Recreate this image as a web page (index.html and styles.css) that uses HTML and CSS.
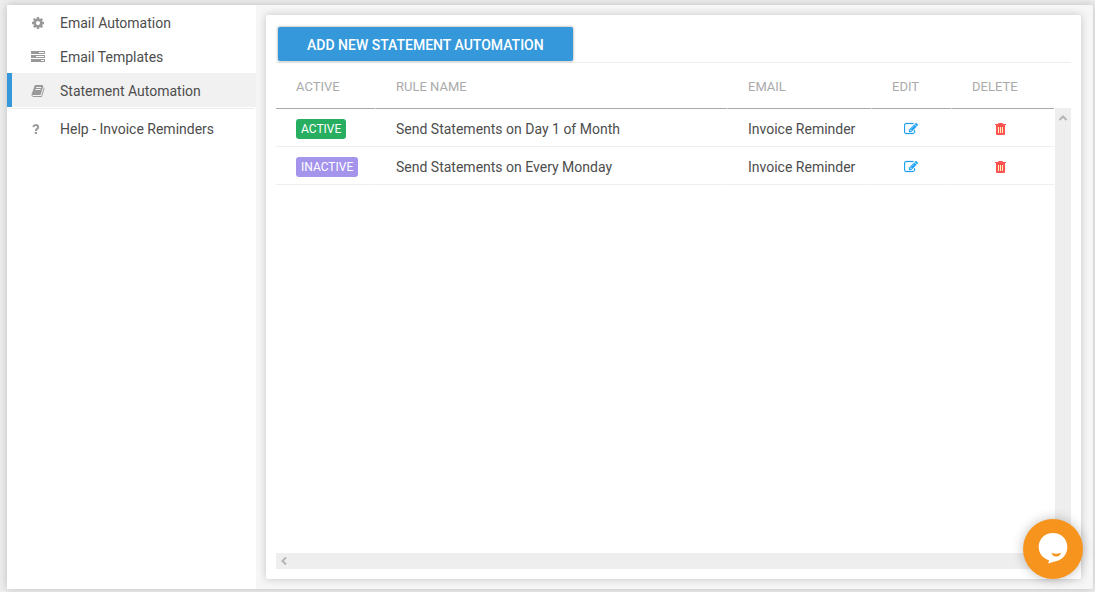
FILE: index.html
```html
<!DOCTYPE html>
<html lang="en">
<head>
<meta charset="utf-8">
<title>Statement Automation</title>
<link rel="stylesheet" href="styles.css">
</head>
<body>
<svg class="defs" aria-hidden="true">
  <symbol id="edit" viewBox="0 0 1792 1792"><path stroke="currentColor" stroke-width="30" d="M888 1184l116-116-152-152-116 116v56h96v96h56zm440-720q-16-16-33 1l-350 350q-17 17-1 33t33-1l350-350q17-17 1-33zm80 594v190q0 119-84.500 203.500t-203.500 84.500h-832q-119 0-203.500-84.500t-84.500-203.500v-832q0-119 84.500-203.500t203.500-84.500h832q63 0 117 25 15 7 18 23 3 17-9 29l-49 49q-14 14-32 8-23-6-45-6h-832q-66 0-113 47t-47 113v832q0 66 47 113t113 47h832q66 0 113-47t47-113v-126q0-13 9-22l64-64q15-15 35-7t20 29zm-96-738l288 288-672 672h-288v-288zm444 132l-92 92-288-288 92-92q28-28 68-28t68 28l152 152q28 28 28 68t-28 68z"/></symbol>
  <symbol id="trash" viewBox="0 0 14 14"><path d="M5.500 2.500v-1h4v1" fill="none" stroke="currentColor"/><path d="M2 2h11v1H2z"/><path d="M3 3h9v9q0 1-1 1H4q-1 0-1-1z"/><path d="M5 5h1v6H5zM7 5h1v6H7zM9 5h1v6H9z" fill="#fff3b8"/></symbol>
</svg>
<div class="shell">
  <nav class="sidebar">
    <a class="nav-item" href="#">
      <svg class="icon" viewBox="0 0 1792 1792"><path d="M1152 896q0-106-75-181t-181-75-181 75-75 181 75 181 181 75 181-75 75-181zm512-109v222q0 12-8 23t-20 13l-185 28q-19 54-39 91 35 50 107 138 10 12 10 25t-9 23q-27 37-99 108t-94 71q-12 0-26-9l-138-108q-44 23-91 38-16 136-29 186-7 28-36 28h-222q-14 0-24.500-8.500t-11.500-21.500l-28-184q-49-16-90-37l-141 107q-10 9-25 9-14 0-25-11-126-114-165-168-7-10-7-23 0-12 8-23 15-21 51-66.500t54-70.500q-27-50-41-99l-183-27q-13-2-21-12.500t-8-23.500v-222q0-12 8-23t19-13l186-28q14-46 39-92-40-57-107-138-10-12-10-24 0-10 9-23 26-36 98.500-107.500t94.500-71.500q13 0 26 10l138 107q44-23 91-38 16-136 29-186 7-28 36-28h222q14 0 24.500 8.500t11.500 21.500l28 184q49 16 90 37l142-107q9-9 24-9 13 0 25 10 129 119 165 170 7 8 7 22 0 12-8 23-15 21-51 66.500t-54 70.500q26 50 41 98l183 28q13 2 21 12.500t8 23.500z"/></svg>
      <span>Email Automation</span>
    </a>
    <a class="nav-item" href="#">
      <svg class="icon" viewBox="0 0 14 14"><path fill-rule="evenodd" d="M0 1h14v3H0zM8 2v1h5V2zM0 5h14v3H0zM5 6v1h8V6zM0 9h14v3H0zM10 10v1h3v-1z"/></svg>
      <span>Email Templates</span>
    </a>
    <a class="nav-item active" href="#" aria-current="page">
      <svg class="icon" viewBox="0 0 1792 1792"><path d="M1703 478q40 57 18 129l-275 906q-19 64-76.500 107.500t-122.500 43.500h-923q-77 0-148.500-53.500t-99.500-131.500q-24-67-2-127 0-4 3-27t4-37q1-8-3-21.500t-3-19.500q2-11 8-21t16.500-23.500 16.500-23.500q23-38 45-91.500t30-91.500q3-10 .5-30t-.5-28q3-11 17-28t17-23q21-36 42-92t25-90q1-9-2.500-32t.5-28q4-13 22-30.500t22-22.500q19-26 42.500-84.500t27.500-96.500q1-8-3-25.500t-2-26.500q2-8 9-18t18-23 17-21q8-12 16.500-30.500t15-35 16-36 19.500-32 26.500-23.500 36-11.500 47.500 5.500l-1 3q38-9 51-9h761q74 0 114 56t18 130l-274 906q-36 119-71.500 153.500t-128.500 34.500h-869q-27 0-38 15-11 16-1 43 24 70 144 70h923q29 0 56-15.500t35-41.500l300-987q7-22 5-57 38 15 59 43zm-1064 2q-4 13 2 22.500t20 9.500h608q13 0 25.500-9.500t16.500-22.500l21-64q4-13-2-22.500t-20-9.500h-608q-13 0-25.500 9.500t-16.500 22.500zm-83 256q-4 13 2 22.500t20 9.500h608q13 0 25.500-9.500t16.500-22.500l21-64q4-13-2-22.500t-20-9.500h-608q-13 0-25.500 9.500t-16.500 22.500z"/></svg>
      <span>Statement Automation</span>
    </a>
    <hr class="divider">
    <a class="nav-item" href="#">
      <svg class="icon" viewBox="0 0 14 14"><path d="M2.200 5Q2.800 3 4.900 3T7.200 5Q7.200 6.300 6 6.900 4.900 7.500 4.900 8.900" fill="none" stroke="currentColor" stroke-width="2"/><path d="M3.800 10H6v2H3.800z"/></svg>
      <span>Help - Invoice Reminders</span>
    </a>
  </nav>
  <main class="panel">
    <div class="toolbar"><button class="add" type="button">ADD NEW STATEMENT AUTOMATION</button></div>
    <div class="list">
      <table class="rules">
        <thead>
          <tr><th class="c-active">ACTIVE</th><th>RULE NAME</th><th class="c-email">EMAIL</th><th class="c-edit">EDIT</th><th class="c-delete">DELETE</th></tr>
        </thead>
        <tbody>
          <tr>
            <td><span class="badge on">ACTIVE</span></td><td>Send Statements on Day 1 of Month</td><td>Invoice Reminder</td>
            <td><button class="act edit" type="button" aria-label="Edit"><svg class="icon"><use href="#edit"/></svg></button></td>
            <td><button class="act delete" type="button" aria-label="Delete"><svg class="icon"><use href="#trash"/></svg></button></td>
          </tr>
          <tr>
            <td><span class="badge off">INACTIVE</span></td><td>Send Statements on Every Monday</td><td>Invoice Reminder</td>
            <td><button class="act edit" type="button" aria-label="Edit"><svg class="icon"><use href="#edit"/></svg></button></td>
            <td><button class="act delete" type="button" aria-label="Delete"><svg class="icon"><use href="#trash"/></svg></button></td>
          </tr>
        </tbody>
      </table>
      <div class="track vertical"><svg class="arrow" viewBox="0 0 8 8"><path d="M.5 6L4 2.500 7.500 6"/></svg></div>
    </div>
    <div class="track horizontal"><svg class="arrow" viewBox="0 0 8 8"><path d="M6 .5L2.500 4 6 7.500"/></svg></div>
  </main>
</div>
<button class="chat" type="button" aria-label="Open chat">
  <svg class="bubble" viewBox="0 0 60 60"><path fill="#fff" d="M30 14c8.200 0 14.300 6 14.300 14 0 6.500-3.600 11-8.300 13.300-3 1.400-6.500 1.500-10.800 3.200l.8-3.300C20 39.500 15.700 34.500 15.700 28 15.700 20 21.800 14 30 14z"/><path fill="#f7941d" d="M28.500 33.800q4.700 1.700 9.500 0-.8 3.600-4.700 3.600t-4.800-3.600z"/></svg>
</button>
</body>
</html>
```
FILE: styles.css
```css
* { box-sizing: border-box; }

body {
  display: flex;
  min-height: 100vh;
  margin: 0;
  padding: 5px 2px 3px 7px;
  background: #ededed;
  color: #4d4d4d;
  font: 14px/20px Roboto, sans-serif;
}

.defs { position: absolute; width: 0; height: 0; }

.icon { display: block; width: 14px; height: 14px; fill: currentColor; }

.shell {
  display: flex;
  flex: 1;
  border-radius: 2px;
  background: #f6f6f6;
  box-shadow: 0 0 8px rgba(0, 0, 0, .2);
}

.sidebar {
  width: 249px;
  background: #fff;
}

.nav-item {
  display: flex;
  align-items: center;
  gap: 15px;
  height: 34px;
  padding: 2px 0 0 19px;
  border-left: 5px solid transparent;
  color: inherit;
  text-decoration: none;
}

.nav-item .icon { color: #999; }
.nav-item.active { border-color: #3498db; background: #f1f1f1; }

.divider {
  height: 1px;
  margin: 1px 2px 2px 3px;
  border: 0;
  background: #ebebeb;
}

.panel {
  display: flex;
  flex: 1;
  flex-direction: column;
  margin: 10px 12px 10px 10px;
  padding: 10px;
  border-radius: 2px;
  background: #fff;
  box-shadow: 0 0 8px rgba(0, 0, 0, .2);
}

.toolbar {
  display: flex;
  padding: 2px 2px 1px;
  border-bottom: 1px solid #eee;
}

.add {
  height: 34px;
  padding: 2px 29px 0;
  border: 0;
  border-radius: 2px;
  background: #3498db;
  box-shadow: 0 0 2px 1px rgba(0, 0, 0, .2);
  color: #fff;
  font: 500 14px/20px Roboto, sans-serif;
}

.list { display: flex; flex: 1; gap: 1px; }

.rules {
  flex: 1;
  align-self: flex-start;
  border-spacing: 0;
  table-layout: fixed;
}

.rules th, .rules td {
  height: 38px;
  padding: 2px 0 0 20px;
  border-right: 1px solid #fff;
  border-bottom: 1px solid #ecf0f1;
  text-align: left;
  white-space: nowrap;
}

.rules th {
  height: 46px;
  border-bottom-color: #aaa;
  color: #aaa;
  font-size: 13px;
  font-weight: 400;
}

.rules th:last-child, .rules td:last-child { border-right: 0; }

.c-active { width: 100px; }
.c-email { width: 144px; }
.c-edit { width: 80px; }
.c-delete { width: 102px; }

.badge {
  display: inline-block;
  padding: 0 5px;
  border-radius: 3px;
  color: #fff;
  font-size: 12px;
}

.on { background: #27ae60; }
.off { background: #a594ec; }

.act {
  display: block;
  padding: 0;
  border: 0;
  background: none;
}

.edit { margin-left: 12px; color: #1da1f2; }
.delete { margin-left: 21px; color: #ff5252; }

.track { display: flex; background: #eee; }

.vertical {
  width: 16px;
  margin-top: 45px;
  padding: 6px 4px;
}

.horizontal {
  height: 16px;
  padding: 4px;
}

.arrow {
  width: 8px;
  height: 8px;
  fill: none;
  stroke: #b5b5b5;
  stroke-width: 2;
}

.chat {
  position: fixed;
  right: 12px;
  bottom: 13px;
  width: 60px;
  height: 60px;
  padding: 0;
  border: 0;
  border-radius: 50%;
  background: #f7941d;
  box-shadow: 0 0 12px rgba(0, 0, 0, .25);
}

.bubble { display: block; width: 60px; height: 60px; }
```
